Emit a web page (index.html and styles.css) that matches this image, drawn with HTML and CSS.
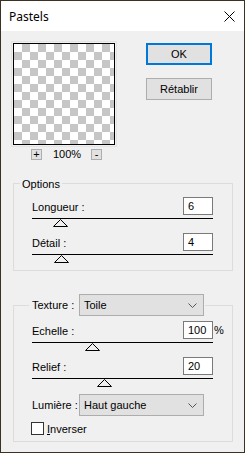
FILE: index.html
```html
<!DOCTYPE html>
<html lang="fr">
<head>
<meta charset="utf-8">
<title>Pastels</title>
<link rel="stylesheet" href="styles.css">
</head>
<body>
<div class="window">
  <div class="titlebar">
    <span class="title">Pastels</span>
    <svg class="close" width="11" height="11" viewBox="0 0 11 11"><path d="M0.5 0.5L10.5 10.5M10.5 0.5L0.5 10.5" stroke="#000" stroke-width="1" fill="none"/></svg>
  </div>
  <div class="top">
    <div class="preview-col">
      <div class="preview-frame"><div class="preview"></div></div>
      <div class="zoom-row">
        <span class="zbtn">+</span>
        <span class="zpct">100%</span>
        <span class="zbtn">-</span>
      </div>
    </div>
    <div class="buttons">
      <div class="btn btn-default">OK</div>
      <div class="btn">Rétablir</div>
    </div>
  </div>

  <div class="group options">
    <span class="legend">Options</span>
    <div class="field">
      <div class="field-row"><span class="label">Longueur :</span><span class="input">6</span></div>
      <div class="slider"><svg class="thumb" style="margin-left:21px" viewBox="0 0 15 8"><polygon points="7.5,0.5 14.5,7.5 0.5,7.5" fill="none" stroke="#000"/></svg></div>
    </div>
    <div class="field">
      <div class="field-row"><span class="label">Détail :</span><span class="input">4</span></div>
      <div class="slider"><svg class="thumb" style="margin-left:22px" viewBox="0 0 15 8"><polygon points="7.5,0.5 14.5,7.5 0.5,7.5" fill="none" stroke="#000"/></svg></div>
    </div>
  </div>

  <div class="group texture">
    <div class="legend legend-select">
      <span class="label label-fixed">Texture :</span>
      <div class="select"><span>Toile</span><svg class="chev" viewBox="0 0 9 5"><polyline points="0.5,0.5 4.5,4.5 8.5,0.5" fill="none" stroke="#555"/></svg></div>
    </div>
    <div class="field">
      <div class="field-row"><span class="label">Echelle :</span><span class="input unit-wrap">100<span class="unit">%</span></span></div>
      <div class="slider"><svg class="thumb" style="margin-left:53px" viewBox="0 0 15 8"><polygon points="7.5,0.5 14.5,7.5 0.5,7.5" fill="none" stroke="#000"/></svg></div>
    </div>
    <div class="field">
      <div class="field-row"><span class="label">Relief :</span><span class="input">20</span></div>
      <div class="slider"><svg class="thumb" style="margin-left:65px" viewBox="0 0 15 8"><polygon points="7.5,0.5 14.5,7.5 0.5,7.5" fill="none" stroke="#000"/></svg></div>
    </div>
    <div class="select-row">
      <span class="label label-fixed">Lumière :</span>
      <div class="select"><span>Haut gauche</span><svg class="chev" viewBox="0 0 9 5"><polyline points="0.5,0.5 4.5,4.5 8.5,0.5" fill="none" stroke="#555"/></svg></div>
    </div>
    <div class="check-row">
      <span class="box"></span>
      <span class="check-label"><u>I</u>nverser</span>
    </div>
  </div>
</div>
</body>
</html>
```
FILE: styles.css
```css
html, body {
  margin: 0;
  padding: 0;
  background: #f0f0f0;
}

.window {
  width: 245px;
  height: 453px;
  box-sizing: border-box;
  border: 1px solid #3d3222;
  background: #f0f0f0;
  font: 11px "Liberation Sans", Arial, sans-serif;
  color: #000;
  overflow: hidden;
}

.titlebar {
  height: 30px;
  background: #fff;
  display: flex;
  align-items: center;
  justify-content: space-between;
  padding: 0 9px 0 8px;
}

.title {
  font: 12px "Noto Sans", "Open Sans", sans-serif;
}

.close {
  width: 11px;
  height: 11px;
  display: block;
}

.top {
  display: flex;
  height: 128px;
}

.preview-col {
  margin: 10px 0 0 10px;
  width: 107px;
}

.preview-frame {
  width: fit-content;
  border: 1px solid #e3e3e3;
  padding: 1px;
}

.preview {
  width: 100px;
  height: 100px;
  border: 1px solid #000;
  background: repeating-conic-gradient(#c6c6c6 0 25%, #fff 0 50%) 0 0 / 16px 16px;
}

.zoom-row {
  display: flex;
  align-items: center;
  margin-top: 1px;
  padding-left: 20px;
  height: 12px;
}

.zbtn {
  width: 11px;
  height: 11px;
  box-sizing: border-box;
  border: 1px solid #adadad;
  background: #e1e1e1;
  display: flex;
  align-items: center;
  justify-content: center;
  font-size: 11px;
  line-height: 1;
}

.zpct {
  margin: 0 10px 0 11px;
}

.buttons {
  margin: 12px 0 0 28px;
  display: flex;
  flex-direction: column;
  gap: 13px;
}

.btn {
  width: 66px;
  height: 22px;
  box-sizing: border-box;
  border: 1px solid #adadad;
  background: #e1e1e1;
  display: flex;
  align-items: center;
  justify-content: center;
}

.btn-default {
  border: 2px solid #0078d7;
}

.group {
  position: relative;
  border: 1px solid #dcdcdc;
  margin: 0 11px 0 12px;
  padding: 13px 19px 7px 18px;
}

.options {
  margin-top: 24px;
}

.texture {
  margin-top: 34px;
  padding-top: 15px;
  padding-bottom: 6px;
}

.legend {
  position: absolute;
  top: -6px;
  left: 6px;
  padding: 0 2px;
  background: #f0f0f0;
  line-height: 13px;
}

.legend-select {
  top: -12px;
  left: 15px;
  padding: 0 1px 0 3px;
  display: flex;
  align-items: center;
}

.field + .field {
  margin-top: 6px;
}

.field-row {
  display: flex;
  align-items: center;
  justify-content: space-between;
  height: 18px;
}

.label {
  padding-top: 2px;
}

.label-fixed {
  width: 47px;
  padding-top: 0;
}

.input {
  width: 30px;
  height: 18px;
  box-sizing: border-box;
  border: 1px solid #7a7a7a;
  background: #fff;
  padding-left: 4px;
  line-height: 16px;
}

.unit-wrap {
  position: relative;
}

.unit {
  position: absolute;
  left: 100%;
  margin-left: 2px;
  top: 0;
}

.slider {
  margin-top: 3px;
  border-top: 1px solid #000;
}

.thumb {
  display: block;
  width: 15px;
  height: 8px;
}

.select {
  width: 125px;
  height: 22px;
  box-sizing: border-box;
  border: 1px solid #adadad;
  background: #e1e1e1;
  display: flex;
  align-items: center;
  justify-content: space-between;
  padding: 0 6px 0 4px;
}

.chev {
  width: 9px;
  height: 5px;
  display: block;
}

.select-row {
  display: flex;
  align-items: center;
  margin-top: 7px;
}

.check-row {
  display: flex;
  align-items: center;
  margin-top: 6px;
  margin-left: -1px;
}

.box {
  width: 13px;
  height: 13px;
  box-sizing: border-box;
  border: 1px solid #333;
  background: #fff;
}

.check-label {
  margin-left: 3px;
}
```
